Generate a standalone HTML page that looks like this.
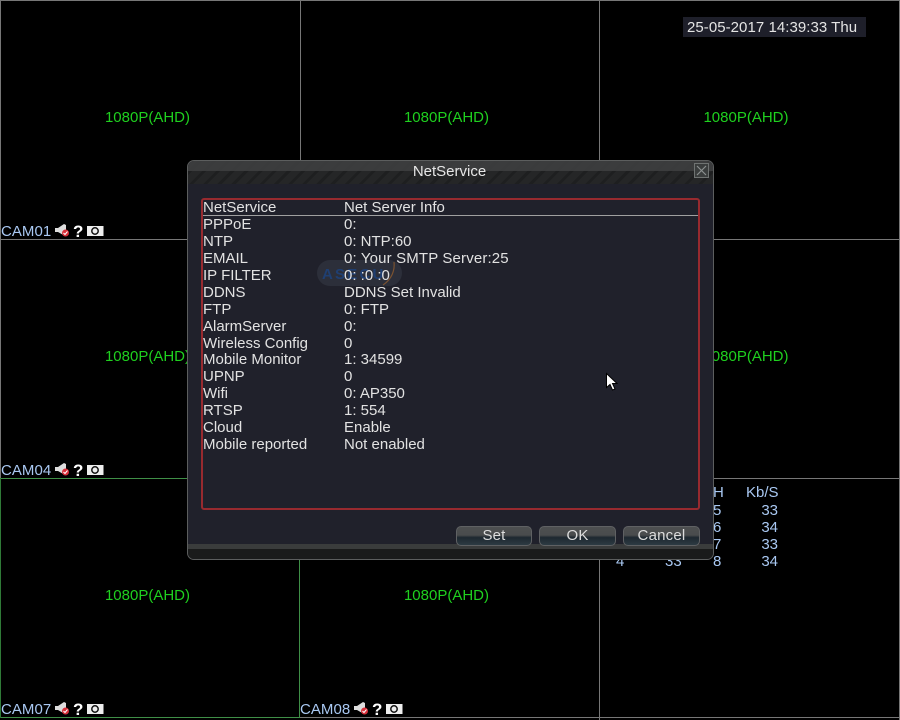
<!DOCTYPE html>
<html>
<head>
<meta charset="utf-8">
<style>
html,body{margin:0;padding:0;background:#000}
#s{position:relative;width:900px;height:720px;overflow:hidden;background:#000;font-family:"Liberation Sans",sans-serif;font-size:15px;color:#dcdcdc;filter:blur(.35px)}
.l{position:absolute;background:#777}
.t{position:absolute;white-space:nowrap;line-height:17px}
.g{color:#1fd01f;font-size:15px;width:120px;text-align:center}
.c{color:#a9c8f2;font-size:15px;letter-spacing:.05px}
.b{color:#a9c8f2;font-size:15px}
.r{text-align:right}
.ic{position:absolute}
#d{position:absolute;left:187px;top:160px;width:527px;height:400px;box-sizing:border-box;border:1px solid #5c5e5e;border-radius:7px;background:#20212b;overflow:hidden}
#tb{position:absolute;left:0;top:0;right:0;height:23px;background:repeating-linear-gradient(135deg,#252627 0 7px,#1e1f20 7px 10px)}
#tb2{position:absolute;left:0;top:0;right:0;height:10px;background:#3f4142;opacity:.85}
#bb{position:absolute;left:0;bottom:0;right:0;height:10px;background:#1a1b1b;border-top:5px solid #3a3c3c}
#box{position:absolute;left:201px;top:198px;width:499px;height:312px;box-sizing:border-box;border:2px solid #982a2f;border-radius:3px}
.btn{position:absolute;top:526px;height:20px;box-sizing:border-box;border:1px solid #5f6163;border-radius:5px;background:linear-gradient(#4d4f50 0,#4a4c4d 45%,#1e2830 58%,#2d3b43 100%);color:#dcdcdc;text-align:center;line-height:18px;font-size:15px;letter-spacing:.2px}
.w{color:#e2e2e2}
</style>
</head>
<body>
<div id="s">
<div class="l" style="left:0;top:0;width:900px;height:1px"></div>
<div class="l" style="left:0;top:0;width:1px;height:478px"></div>
<div class="l" style="left:300px;top:0;width:1px;height:478px"></div>
<div class="l" style="left:599px;top:0;width:1px;height:720px"></div>
<div class="l" style="left:899px;top:0;width:1px;height:720px"></div>
<div class="l" style="left:0;top:239px;width:900px;height:1px"></div>
<div class="l" style="left:300px;top:478px;width:600px;height:1px"></div>
<div class="l" style="left:300px;top:717px;width:600px;height:1px"></div>
<div class="l" style="left:0;top:478px;width:300px;height:1px;background:#3f8f47"></div>
<div class="l" style="left:0;top:717px;width:300px;height:1px;background:#3f8f47"></div>
<div class="l" style="left:0;top:478px;width:1px;height:240px;background:#2f7a37"></div>
<div class="l" style="left:299px;top:478px;width:1px;height:240px;background:#3f8f47"></div>

<div class="t g" style="left:87.500px;top:109px">1080P(AHD)</div>
<div class="t g" style="left:386.500px;top:109px">1080P(AHD)</div>
<div class="t g" style="left:686px;top:109px">1080P(AHD)</div>
<div class="t g" style="left:87.500px;top:348px">1080P(AHD)</div>
<div class="t g" style="left:686px;top:348px">1080P(AHD)</div>
<div class="t g" style="left:87.500px;top:587px">1080P(AHD)</div>
<div class="t g" style="left:386.500px;top:587px">1080P(AHD)</div>

<div class="t" style="left:683px;top:17px;width:183px;height:20px;background:#1e1f2a"></div>
<div class="t" style="left:687px;top:19px;font-size:15px;color:#e4e4e4;letter-spacing:.05px">25-05-2017 14:39:33 Thu</div>

<div class="t c" style="left:1px;top:223px">CAM01</div>
<svg class="ic" style="left:54px;top:223px" width="52" height="15" viewBox="0 0 52 15"><path d="M1 5h3l6-4 2 1v7l-1 4-7-4H1z" fill="#ddd"/><circle cx="11.500" cy="10" r="3.500" fill="#d8303a"/><path d="M9.500 10l1.500 1.500 2.500-3" stroke="#fff" fill="none"/><text x="19" y="14" font-family="Liberation Sans" font-size="17" font-weight="bold" fill="#fff">?</text><rect x="33" y="3" width="16.500" height="10" fill="#eee"/><circle cx="41" cy="8" r="3.200" fill="none" stroke="#111" stroke-width="1.500"/></svg>
<div class="t c" style="left:1px;top:462px">CAM04</div>
<svg class="ic" style="left:54px;top:462px" width="52" height="15" viewBox="0 0 52 15"><path d="M1 5h3l6-4 2 1v7l-1 4-7-4H1z" fill="#ddd"/><circle cx="11.500" cy="10" r="3.500" fill="#d8303a"/><path d="M9.500 10l1.500 1.500 2.500-3" stroke="#fff" fill="none"/><text x="19" y="14" font-family="Liberation Sans" font-size="17" font-weight="bold" fill="#fff">?</text><rect x="33" y="3" width="16.500" height="10" fill="#eee"/><circle cx="41" cy="8" r="3.200" fill="none" stroke="#111" stroke-width="1.500"/></svg>
<div class="t c" style="left:1px;top:701px">CAM07</div>
<svg class="ic" style="left:54px;top:701px" width="52" height="15" viewBox="0 0 52 15"><path d="M1 5h3l6-4 2 1v7l-1 4-7-4H1z" fill="#ddd"/><circle cx="11.500" cy="10" r="3.500" fill="#d8303a"/><path d="M9.500 10l1.500 1.500 2.500-3" stroke="#fff" fill="none"/><text x="19" y="14" font-family="Liberation Sans" font-size="17" font-weight="bold" fill="#fff">?</text><rect x="33" y="3" width="16.500" height="10" fill="#eee"/><circle cx="41" cy="8" r="3.200" fill="none" stroke="#111" stroke-width="1.500"/></svg>
<div class="t c" style="left:300px;top:701px">CAM08</div>
<svg class="ic" style="left:353px;top:701px" width="52" height="15" viewBox="0 0 52 15"><path d="M1 5h3l6-4 2 1v7l-1 4-7-4H1z" fill="#ddd"/><circle cx="11.500" cy="10" r="3.500" fill="#d8303a"/><path d="M9.500 10l1.500 1.500 2.500-3" stroke="#fff" fill="none"/><text x="19" y="14" font-family="Liberation Sans" font-size="17" font-weight="bold" fill="#fff">?</text><rect x="33" y="3" width="16.500" height="10" fill="#eee"/><circle cx="41" cy="8" r="3.200" fill="none" stroke="#111" stroke-width="1.500"/></svg>

<div class="t b" style="left:746px;top:484px">Kb/S</div>
<div class="t b r" style="left:740px;top:502px;width:38px">33</div>
<div class="t b r" style="left:740px;top:519px;width:38px">34</div>
<div class="t b r" style="left:740px;top:536px;width:38px">33</div>
<div class="t b r" style="left:740px;top:553px;width:38px">34</div>
<div class="t b" style="left:713px;top:484px">H</div>
<div class="t b" style="left:713px;top:502px">5</div>
<div class="t b" style="left:713px;top:519px">6</div>
<div class="t b" style="left:713px;top:536px">7</div>
<div class="t b" style="left:713px;top:553px">8</div>
<div class="t b" style="left:616px;top:553px">4</div>
<div class="t b" style="left:665px;top:553px">33</div>

<div id="d"><div id="tb"></div><div id="tb2"></div><div id="bb"></div></div>
<div class="t" style="left:187px;top:163px;width:525px;text-align:center;color:#e6e6e6;font-size:15px">NetService</div>
<svg class="ic" style="left:694px;top:163px" width="15" height="15" viewBox="0 0 15 15"><rect x=".5" y=".5" width="14" height="14" fill="#3a3d3d" stroke="#6f7372"/><path d="M3 3l9 9M12 3l-9 9" stroke="#8b908f" stroke-width="1.200"/></svg>

<div id="box"></div>
<div class="l" style="left:203px;top:215px;width:495px;height:1px;background:#a0a0a0"></div>
<div style="position:absolute;left:317px;top:260px;width:85px;height:26px;border-radius:13px;background:#2c2f3a"></div>
<div class="t" style="left:322px;top:266px;font-size:15px;font-weight:bold;color:#1f3f72;letter-spacing:2.200px">ASECU</div>
<svg class="ic" style="left:380px;top:260px" width="20" height="28" viewBox="0 0 20 28"><path d="M14 2c1 8-2 17-11 23" fill="none" stroke="#7a5230" stroke-width="1.200"/></svg>

<div class="t w" style="left:203px;top:199px">NetService</div><div class="t w" style="left:344px;top:199px">Net Server Info</div>
<div class="t w" style="left:203px;top:216px">PPPoE</div><div class="t w" style="left:344px;top:216px">0:</div>
<div class="t w" style="left:203px;top:233px">NTP</div><div class="t w" style="left:344px;top:233px">0: NTP:60</div>
<div class="t w" style="left:203px;top:250px">EMAIL</div><div class="t w" style="left:344px;top:250px;letter-spacing:.15px">0: Your SMTP Server:25</div>
<div class="t w" style="left:203px;top:267px">IP FILTER</div><div class="t w" style="left:344px;top:267px">0: :0 :0</div>
<div class="t w" style="left:203px;top:284px">DDNS</div><div class="t w" style="left:344px;top:284px">DDNS Set Invalid</div>
<div class="t w" style="left:203px;top:301px">FTP</div><div class="t w" style="left:344px;top:301px">0: FTP</div>
<div class="t w" style="left:203px;top:318px">AlarmServer</div><div class="t w" style="left:344px;top:318px">0:</div>
<div class="t w" style="left:203px;top:335px">Wireless Config</div><div class="t w" style="left:344px;top:335px">0</div>
<div class="t w" style="left:203px;top:351px">Mobile Monitor</div><div class="t w" style="left:344px;top:351px">1: 34599</div>
<div class="t w" style="left:203px;top:368px">UPNP</div><div class="t w" style="left:344px;top:368px">0</div>
<div class="t w" style="left:203px;top:385px">Wifi</div><div class="t w" style="left:344px;top:385px">0: AP350</div>
<div class="t w" style="left:203px;top:402px">RTSP</div><div class="t w" style="left:344px;top:402px">1: 554</div>
<div class="t w" style="left:203px;top:419px">Cloud</div><div class="t w" style="left:344px;top:419px">Enable</div>
<div class="t w" style="left:203px;top:436px">Mobile reported</div><div class="t w" style="left:344px;top:436px">Not enabled</div>

<div class="btn" style="left:456px;width:76px">Set</div>
<div class="btn" style="left:539px;width:77px">OK</div>
<div class="btn" style="left:623px;width:77px">Cancel</div>

<svg class="ic" style="left:605px;top:372px" width="14" height="20" viewBox="0 0 14 20"><path d="M1.500 1.500v14l3.500-3 2.500 5.500 2.500-1-2.500-5.500h4.500z" fill="#fff" stroke="#000" stroke-width="1"/></svg>
</div>
</body>
</html>
